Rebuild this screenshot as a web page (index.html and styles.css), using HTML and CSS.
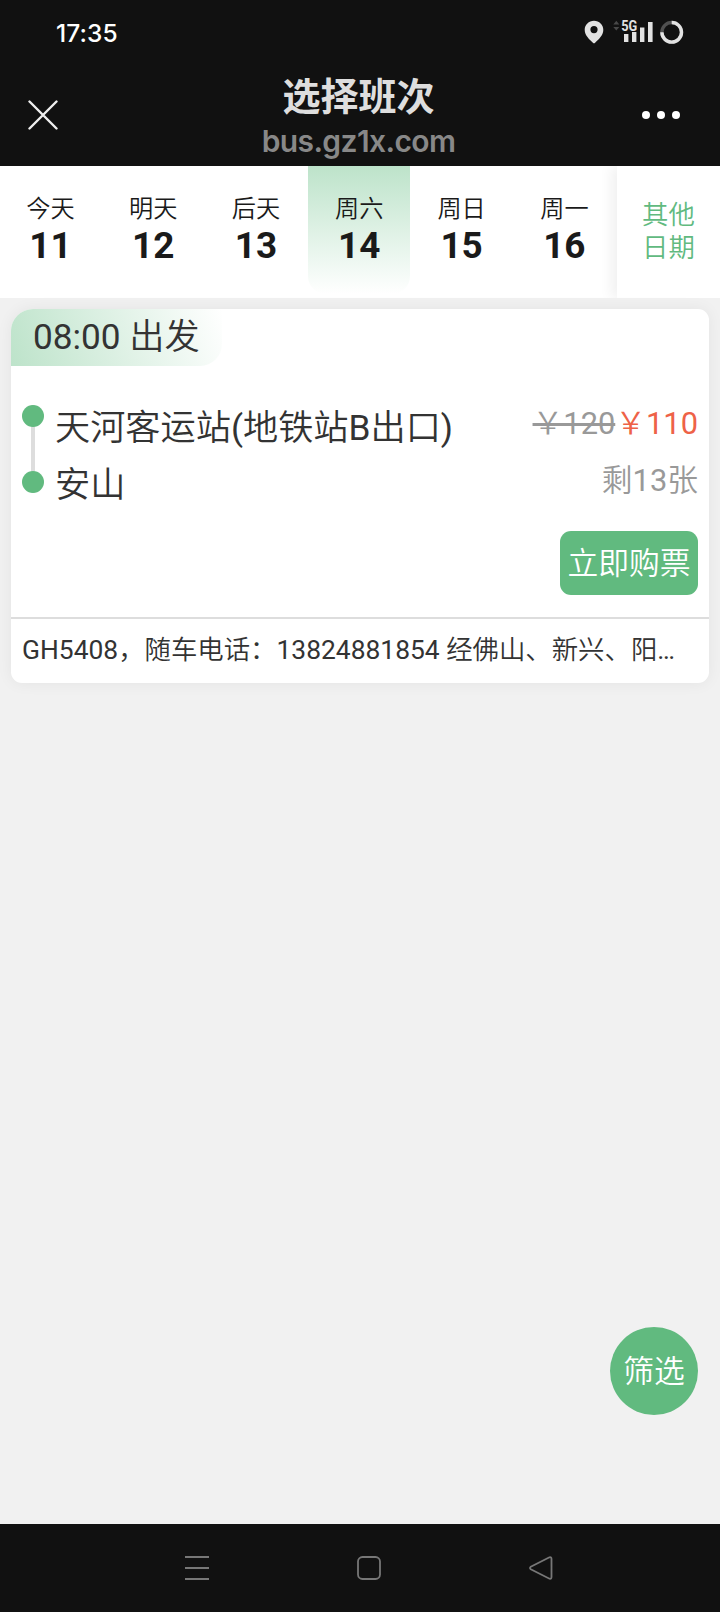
FILE: index.html
```html
<!DOCTYPE html>
<html lang="zh-CN">
<head>
<meta charset="utf-8">
<title>选择班次</title>
<link rel="stylesheet" href="styles.css">
</head>
<body>
<div class="screen">
  <header class="top">
    <div class="status">
      <span class="clock">17:35</span>
      <svg class="status-icons" width="104" height="32" viewBox="580 16 104 32">
        <path fill="#e2e2e2" fill-rule="evenodd" d="M594 20.700c-5.200 0-9.300 4-9.300 9.200 0 5.500 5.200 9.800 8.200 12.800q1.100 1 2.200 0c3-3 8.200-7.300 8.200-12.800 0-5.200-4.100-9.200-9.300-9.200zM594 26a3.600 3.600 0 1 1 0 7.200a3.600 3.600 0 1 1 0-7.200z"/>
        <path fill="#484848" d="M616.300 20.800l3 3.600h-6zM616.300 30.500l3-3.600h-6z"/>
        <path fill="#e2e2e2" d="M624 34h4.400v8H624zM632 32h4.400v10H632zM640 27.500h4.400V42H640zM648 22h4.600v20H648z"/>
        <text class="net" x="621.300" y="31" textLength="16" lengthAdjust="spacingAndGlyphs">5G</text>
        <circle cx="671.700" cy="32.300" r="9.800" fill="none" stroke="#505050" stroke-width="3.400"/>
        <path d="M671.700 22.500a9.800 9.800 0 1 1-9.800 9.800" fill="none" stroke="#e2e2e2" stroke-width="3.400"/>
      </svg>
    </div>
    <div class="titlebar">
      <svg class="close" width="30" height="30" viewBox="0 0 30 30"><path d="M1.500 1.500l27 27M28.500 1.500l-27 27" stroke="#efefef" stroke-width="2.400" stroke-linecap="round"/></svg>
      <div class="titles">
        <h1 class="title">选择班次</h1>
        <div class="host">bus.gz1x.com</div>
      </div>
      <div class="more"><i></i><i></i><i></i></div>
    </div>
  </header>

  <nav class="dates">
    <div class="day"><span class="week">今天</span><b class="num">11</b></div>
    <div class="day"><span class="week">明天</span><b class="num">12</b></div>
    <div class="day"><span class="week">后天</span><b class="num">13</b></div>
    <div class="day active"><span class="week">周六</span><b class="num">14</b></div>
    <div class="day"><span class="week">周日</span><b class="num">15</b></div>
    <div class="day"><span class="week">周一</span><b class="num">16</b></div>
    <div class="other"><span>其他</span><span>日期</span></div>
  </nav>

  <main class="list">
    <article class="card">
      <div class="depart">08:00 出发</div>
      <div class="body">
        <div class="line"><i></i><i></i></div>
        <div class="stations">
          <div>天河客运站(地铁站B出口)</div>
          <div>安山</div>
        </div>
        <div class="side">
          <div class="price"><s>￥120</s><span class="now">￥110</span></div>
          <div class="left">剩13张</div>
          <button class="buy">立即购票</button>
        </div>
      </div>
      <footer class="note">GH5408，随车电话：13824881854 经佛山、新兴、阳…</footer>
    </article>
    <button class="filter">筛选</button>
  </main>

  <div class="sysnav">
    <svg width="26" height="26" viewBox="0 0 26 26"><path d="M1 2h24M1 13h24M1 24h24"/></svg>
    <svg width="26" height="26" viewBox="0 0 26 26"><rect x="2" y="2" width="22" height="22" rx="4.500"/></svg>
    <svg width="26" height="26" viewBox="0 0 26 26"><path d="M21.500 2.300L2.800 11.800q-1.600 1.200 0 2.400l18.700 9.500q2 .5 2-1.700V4q0-2.200-2-1.700z"/></svg>
  </div>
</div>
</body>
</html>
```
FILE: styles.css
```css
* { box-sizing: border-box; }
body {
  margin: 0;
  font-family: Roboto, "Noto Sans CJK SC DemiLight", "Noto Sans CJK SC", sans-serif;
  color: #333;
}
.screen {
  width: 720px;
  height: 1612px;
  display: flex;
  flex-direction: column;
  background: #f1f1f1;
}
.top { height: 166px; background: #111; }
.status {
  height: 64px;
  display: flex;
  justify-content: space-between;
  align-items: center;
  padding: 0 36px 0 56px;
}
.clock {
  margin-top: 1px;
  font: 500 24.500px/30px Inter, sans-serif;
  letter-spacing: .1px;
  color: #fff;
}
.net { font: 700 15.500px Roboto, sans-serif; fill: #e2e2e2; stroke: #111; stroke-width: 2px; paint-order: stroke; }
.titlebar {
  height: 102px;
  display: flex;
  justify-content: space-between;
  padding: 0 40px 0 28px;
}
.close { margin-top: 36px; }
.titles { text-align: center; padding-left: 17px; }
.title {
  margin: 6px 0 0;
  font: 700 38px/48px "Noto Sans CJK SC", sans-serif;
  color: #dedede;
}
.host {
  margin-top: 5px;
  font: 600 30px/36px Inter, sans-serif;
  letter-spacing: -0.6px;
  color: #888;
}
.more { display: flex; gap: 7px; margin-top: 47px; }
.more i { width: 8px; height: 8px; border-radius: 50%; background: #fff; }

.dates {
  height: 132px;
  display: grid;
  grid-template-columns: repeat(6, 102.800px) 1fr;
  background: #fff;
}
.day {
  height: 128px;
  padding: 26px 2px 0 0;
  display: flex;
  flex-direction: column;
  align-items: center;
  color: #1a1a1a;
}
.active {
  margin-right: 1px;
  padding-right: 0;
  border-radius: 0 0 18px 18px;
  background: linear-gradient(#bde3ca, #fff);
}
.week { font-size: 24.200px; line-height: 34px; font-weight: 350; }
.num { font-size: 36.900px; line-height: 40px; }
.other {
  display: flex;
  flex-direction: column;
  align-items: center;
  padding-top: 33px;
  font-size: 26.400px;
  font-weight: 350;
  line-height: 32.500px;
  color: #61ba7f;
  box-shadow: -6px 0 12px rgba(0, 0, 0, .06);
  clip-path: inset(0 0 0 -20px);
}

.list { flex: 1; position: relative; padding: 11px; }
.card {
  height: 374px;
  display: flex;
  flex-direction: column;
  border-radius: 22px 11px 11px 11px;
  background: #fff;
  box-shadow: 0 0 16px rgba(0, 0, 0, .06);
}
.depart {
  width: 211px;
  height: 57px;
  padding-left: 22px;
  border-radius: 22px 0 22px 0;
  background: linear-gradient(70deg, #bde3ca, #fff);
  font-size: 35.200px;
  line-height: 56px;
  white-space: nowrap;
}
.body {
  height: 251px;
  display: flex;
  padding: 0 11px;
}
.line {
  width: 22px;
  height: 88px;
  margin-top: 39px;
  display: flex;
  flex-direction: column;
  justify-content: space-between;
  background: linear-gradient(#ddd, #ddd) center / 4px 100% no-repeat;
}
.line i { width: 22px; height: 22px; border-radius: 50%; background: #61ba7f; }
.stations {
  margin: 34px 0 0 11px;
  font-size: 35.200px;
  line-height: 56.500px;
  white-space: nowrap;
}
.side {
  margin-left: auto;
  display: flex;
  flex-direction: column;
  align-items: flex-end;
  color: #999;
  font-size: 30.800px;
}
.price { margin-top: 30px; line-height: 56px; }
.now { color: #ee6247; }
.left { line-height: 57px; }
.buy {
  width: 138px;
  height: 64px;
  margin-top: 22px;
  padding: 0 0 6px;
  border: 0;
  border-radius: 11px;
  background: #61ba7f;
  color: #fff;
  font: inherit;
}
.note {
  height: 66px;
  padding: 0 11px;
  border-top: 2px solid #ddd;
  font-size: 26.400px;
  line-height: 62px;
  white-space: nowrap;
}
.filter {
  position: absolute;
  right: 22px;
  bottom: 109px;
  width: 88px;
  height: 88px;
  padding: 0 0 6px;
  border: 0;
  border-radius: 50%;
  background: #61ba7f;
  color: #fff;
  font: 30.800px Roboto, "Noto Sans CJK SC DemiLight", "Noto Sans CJK SC", sans-serif;
}
.sysnav {
  height: 88px;
  display: flex;
  justify-content: space-between;
  align-items: center;
  padding: 0 166px 0 184px;
  background: #111;
}
.sysnav svg { fill: none; stroke: #777; stroke-width: 1.800; }
```
